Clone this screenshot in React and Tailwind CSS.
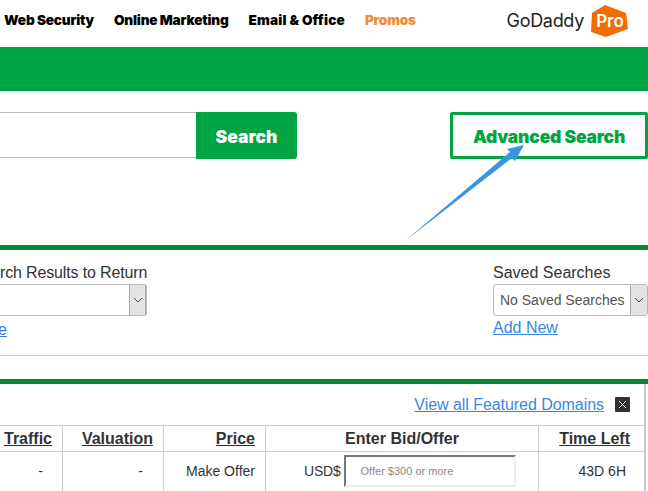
function Chevron() {
  return (
    <svg width="10" height="6" viewBox="0 0 10 6" fill="none" stroke="#444" strokeWidth="1">
      <path d="M1 1l4 4 4-4" />
    </svg>
  );
}

function NavLink({ children, className = "text-black tracking-[-0.2px]" }) {
  return <a className={`font-['Inter',sans-serif] text-[13.6px] font-black whitespace-nowrap ${className}`}>{children}</a>;
}

export default function App() {
  return (
    <div className="relative h-[491px] w-[648px] overflow-hidden bg-white font-['Liberation_Sans',sans-serif] text-[#333]">
      {/* Top nav */}
      <div className="flex h-[47px] items-center pb-[6px] pl-1">
        <div className="flex gap-5">
          <NavLink>Web Security</NavLink>
          <NavLink>Online Marketing</NavLink>
          <NavLink className="text-black tracking-[0.15px]">Email &amp; Office</NavLink>
          <NavLink className="text-[#f58a3c] tracking-[-0.2px]">Promos</NavLink>
        </div>
        <div className="ml-auto mr-5 flex items-center gap-[6px]">
          <span className="font-['Inter',sans-serif] text-[18px] font-normal tracking-[-0.3px] text-[#222]">GoDaddy</span>
          <svg width="38" height="32" viewBox="0 0 38 32">
            <path d="M15 0l21 8 2 16-22 8-15-5L2 8z" fill="#f26d00" />
            <text x="20" y="22" textAnchor="middle" fill="#fff" fontFamily="Inter, sans-serif" fontSize="17" fontWeight="600">Pro</text>
          </svg>
        </div>
      </div>

      {/* Green band */}
      <div className="h-11 bg-[#00a443]" />

      {/* Search row */}
      <div className="flex h-[154px] items-start pt-[21px]">
        <div className="h-[46px] w-[196px] border-y border-[#bdbdbd] bg-white" />
        <button className="h-[47px] w-[101px] rounded-r-[3px] bg-[#00a443] pt-[3px] font-['Inter',sans-serif] text-[17.5px] font-black text-white">Search</button>
        <button className="ml-[153px] h-[47px] w-[198px] rounded-[2px] border-[3px] border-[#00a443] pt-[3px] font-['Inter',sans-serif] text-[17.5px] font-black tracking-[-0.2px] text-[#00a443]">Advanced Search</button>
      </div>

      {/* Filters */}
      <div className="h-[5px] bg-[#008a32]" />
      <div className="flex h-[106px] justify-between border-b border-[#ccc] pt-[13px]">
        <div className="w-[147px]">
          <div className="text-right text-base leading-5 tracking-[-0.15px] whitespace-nowrap">rch Results to Return</div>
          <div className="mt-[1px] flex h-8 justify-end rounded-r-[3px] border-y border-r border-[#bbb]">
            <div className="flex w-[17px] items-center justify-center border-x border-[#aaa] bg-[#e3e3e3]"><Chevron /></div>
          </div>
          <a className="mt-[4px] -ml-[2px] block text-base leading-5 text-[#3b78d8] underline">e</a>
        </div>
        <div className="w-[155px]">
          <div className="text-base leading-5 whitespace-nowrap">Saved Searches</div>
          <div className="mt-[1px] flex h-8 rounded-[3px] border border-[#bbb]">
            <div className="flex-1 pl-[6px] text-sm leading-[30px] whitespace-nowrap text-[#555]">No Saved Searches</div>
            <div className="flex w-[17px] items-center justify-center border-l border-[#aaa] bg-[#e3e3e3]"><Chevron /></div>
          </div>
          <a className="mt-[2px] block text-base leading-5 text-[#3b86e8] underline">Add New</a>
        </div>
      </div>

      {/* Featured domains */}
      <div className="mt-[23px] h-[5px] bg-[#008a32]" />
      <div className="w-[646px] border-r-2 border-[#ccc]">
        <div className="flex h-[41px] items-center justify-end gap-[11px] pr-[14px]">
          <a className="text-base tracking-[-0.05px] text-[#3b86e8] underline">View all Featured Domains</a>
          <span className="flex h-[15px] w-[15px] items-center justify-center rounded-[1px] bg-[#333]">
            <svg width="9" height="9" viewBox="0 0 9 9" stroke="#fff" strokeWidth="1">
              <path d="M1 1l7 7M8 1l-7 7" />
            </svg>
          </span>
        </div>
        <div className="grid grid-cols-[63px_101px_102px_273px_105px] border-t border-[#ccc]">
          <div className="h-[26px] border-r border-b border-[#ccc] pr-[10px] text-right text-base font-bold leading-[25px] underline">Traffic</div>
          <div className="border-r border-b border-[#ccc] pr-[10px] text-right text-base font-bold leading-[25px] underline">Valuation</div>
          <div className="border-r border-b border-[#ccc] pr-[10px] text-right text-base font-bold leading-[25px] underline">Price</div>
          <div className="border-r border-b border-[#ccc] text-center text-base font-bold leading-[25px]">Enter Bid/Offer</div>
          <div className="border-b border-[#ccc] pr-[14px] text-right text-base font-bold leading-[25px] underline">Time Left</div>

          <div className="h-10 border-r border-[#ccc] pr-[19px] text-right text-sm leading-[38px]">-</div>
          <div className="border-r border-[#ccc] pr-[20px] text-right text-sm leading-[38px]">-</div>
          <div className="border-r border-[#ccc] pr-[10px] text-right text-sm leading-[38px]">Make Offer</div>
          <div className="flex items-start justify-start border-r border-[#ccc] pt-[3px] pl-[38px]">
            <span className="mr-[3px] text-sm leading-[32px] tracking-[-0.2px]">USD$</span>
            <div className="h-[32px] w-[172px] border-2 border-t-[#767676] border-r-[#eee] border-b-[#eee] border-l-[#767676] pl-[15px] text-[11px] leading-[28px] text-[#8a8a8a]">Offer $300 or more</div>
          </div>
          <div className="pr-[18px] text-right text-sm leading-[38px]">43D 6H</div>
        </div>
      </div>

      {/* Annotation arrow */}
      <svg className="absolute top-0 left-0" width="648" height="491" viewBox="0 0 648 491">
        <path d="M405 241L510 152l-3-3 17-4-9 16-3-3z" fill="#3b93e6" />
      </svg>
    </div>
  );
}
